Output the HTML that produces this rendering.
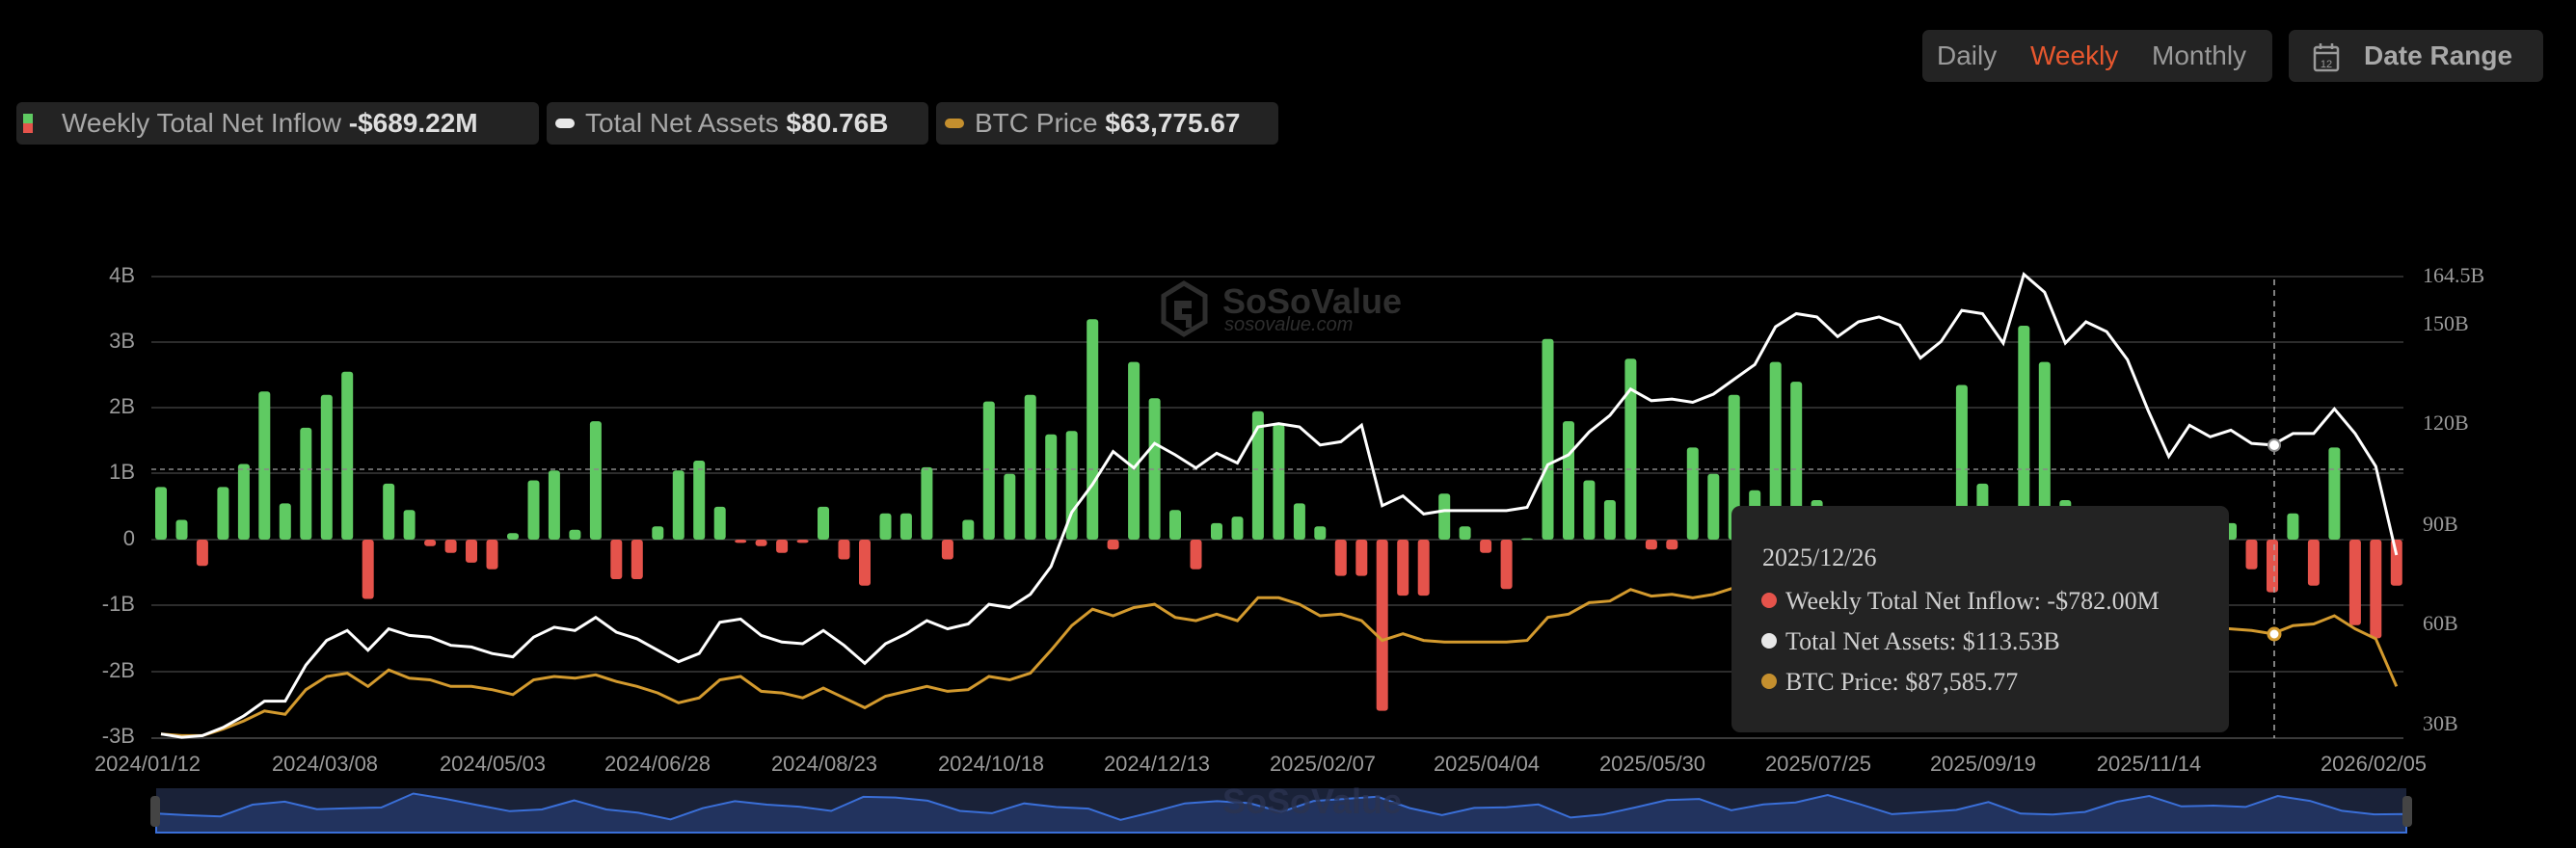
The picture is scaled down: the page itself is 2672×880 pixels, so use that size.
<!DOCTYPE html>
<html><head><meta charset="utf-8"><style>
html,body{margin:0;padding:0;background:#000;width:2672px;height:880px;overflow:hidden;font-family:"Liberation Sans",sans-serif}
.chip{position:absolute;top:106px;height:44px;background:#232323;border-radius:6px;color:#a8a8a8;font-size:28px;line-height:44px;white-space:nowrap}
.chip b{color:#dedede;font-weight:bold}
.box{position:absolute;top:31px;height:54px;background:#232323;border-radius:7px;color:#9a9a9a;font-size:28px;line-height:54px}
</style></head><body>
<div class="box" style="left:1994px;width:363px;"><span style="position:absolute;left:15px">Daily</span><span style="position:absolute;left:112px;color:#e8572e">Weekly</span><span style="position:absolute;left:238px">Monthly</span></div>
<div class="box" style="left:2374px;width:264px;">
<svg style="position:absolute;left:25px;top:14px" width="28" height="30" viewBox="0 0 28 30"><rect x="2" y="4" width="24" height="24" rx="2" fill="none" stroke="#9a9a9a" stroke-width="2.5"/><line x1="2" y1="10" x2="26" y2="10" stroke="#9a9a9a" stroke-width="2.5"/><line x1="8" y1="0" x2="8" y2="6" stroke="#9a9a9a" stroke-width="2.5"/><line x1="20" y1="0" x2="20" y2="6" stroke="#9a9a9a" stroke-width="2.5"/><text x="14" y="25" font-size="11" fill="#9a9a9a" text-anchor="middle" font-family="Liberation Sans">12</text></svg>
<span style="position:absolute;left:78px;font-weight:bold;color:#a8a8a8">Date Range</span></div>
<div class="chip" style="left:17px;width:542px"><span style="position:absolute;left:7px;top:12px;width:10px;height:10px;background:#5fca62"></span><span style="position:absolute;left:7px;top:22px;width:10px;height:10px;background:#e5534b"></span><span style="position:absolute;left:47px">Weekly Total Net Inflow <b>-$689.22M</b></span></div>
<div class="chip" style="left:567px;width:396px"><span style="position:absolute;left:9px;top:17px;width:20px;height:10px;border-radius:5px;background:#e8e8e8"></span><span style="position:absolute;left:40px">Total Net Assets <b>$80.76B</b></span></div>
<div class="chip" style="left:971px;width:355px"><span style="position:absolute;left:9px;top:17px;width:20px;height:10px;border-radius:5px;background:#c48f2e"></span><span style="position:absolute;left:40px">BTC Price <b>$63,775.67</b></span></div>

<svg id="c" style="position:absolute;left:0;top:0" width="2672" height="880" viewBox="0 0 2672 880">
<g stroke="#2c2c2c" stroke-width="2">
<line x1="157" y1="287" x2="2493" y2="287"/><line x1="157" y1="355" x2="2493" y2="355"/><line x1="157" y1="423" x2="2493" y2="423"/><line x1="157" y1="491" x2="2493" y2="491"/><line x1="157" y1="560" x2="2493" y2="560"/><line x1="157" y1="628" x2="2493" y2="628"/><line x1="157" y1="697" x2="2493" y2="697"/><line x1="157" y1="766" x2="2493" y2="766" stroke="#3a3a3a"/>
</g>
<g fill="#2e2e2e">
<path d="M1228 294 L1250 307 L1250 334 L1228 347 L1207 334 L1207 307 Z" fill="none" stroke="#2e2e2e" stroke-width="5"/>
<path d="M1218 312 h18 v8 h-10 v6 h10 v14 h-6 v-8 h-12z"/>
<text x="1268" y="325" font-size="36" font-weight="bold" font-family="Liberation Sans">SoSoValue</text>
<text x="1270" y="343" font-size="20" font-style="italic" font-family="Liberation Sans">sosovalue.com</text>
</g>
<g fill="#9a9a9a" font-size="22" font-family="Liberation Sans" text-anchor="end">
<text x="140" y="293">4B</text><text x="140" y="361">3B</text><text x="140" y="429">2B</text><text x="140" y="497">1B</text><text x="140" y="566">0</text><text x="140" y="634">-1B</text><text x="140" y="703">-2B</text><text x="140" y="771">-3B</text>
</g>
<g fill="#9a9a9a" font-size="22" font-family="Liberation Serif">
<text x="2513" y="293">164.5B</text><text x="2513" y="343">150B</text><text x="2513" y="446">120B</text><text x="2513" y="551">90B</text><text x="2513" y="654">60B</text><text x="2513" y="758">30B</text>
</g>
<g fill="#9a9a9a" font-size="22" font-family="Liberation Sans" text-anchor="middle">
<text x="153" y="800">2024/01/12</text><text x="337" y="800">2024/03/08</text><text x="511" y="800">2024/05/03</text><text x="682" y="800">2024/06/28</text><text x="855" y="800">2024/08/23</text><text x="1028" y="800">2024/10/18</text><text x="1200" y="800">2024/12/13</text><text x="1372" y="800">2025/02/07</text><text x="1542" y="800">2025/04/04</text><text x="1714" y="800">2025/05/30</text><text x="1886" y="800">2025/07/25</text><text x="2057" y="800">2025/09/19</text><text x="2229" y="800">2025/11/14</text><text x="2462" y="800">2026/02/05</text>
</g>
<g id="bars"></g>
<line x1="157" y1="487" x2="2493" y2="487" stroke="#888" stroke-width="1.5" stroke-dasharray="5,4"/>
<polyline id="btc" fill="none" stroke="#d39a2e" stroke-width="3"/>
<polyline id="tna" fill="none" stroke="#fff" stroke-width="3"/>
<line x1="2359" y1="290" x2="2359" y2="766" stroke="#aaa" stroke-width="1.5" stroke-dasharray="6,5"/>
<circle cx="2359" cy="462" r="6" fill="#fff" stroke="#888" stroke-width="2"/>
<circle cx="2359" cy="658" r="6" fill="#fff" stroke="#d39a2e" stroke-width="3"/>
<rect x="1796" y="525" width="516" height="235" rx="9" fill="#232323"/>
<g font-family="Liberation Serif" font-size="26" fill="#cfcfcf">
<text x="1828" y="587">2025/12/26</text>
<circle cx="1835" cy="623" r="8" fill="#e5534b"/><text x="1852" y="632">Weekly Total Net Inflow: -$782.00M</text>
<circle cx="1835" cy="665" r="8" fill="#e8e8e8"/><text x="1852" y="674">Total Net Assets: $113.53B</text>
<circle cx="1835" cy="707" r="8" fill="#c48f2e"/><text x="1852" y="716">BTC Price: $87,585.77</text>
</g>
<rect x="162" y="818" width="2334" height="46" fill="#1a2238"/>
<path id="sl" fill="#22335e" stroke="#3a6fd8" stroke-width="2"/>
<rect x="156" y="826" width="10" height="32" rx="4" fill="#444"/>
<rect x="2492" y="826" width="10" height="32" rx="4" fill="#444"/>
<g fill="#2b3350" opacity="0.8"><text x="1268" y="844" font-size="36" font-weight="bold" font-family="Liberation Sans">SoSoValue</text></g>
</svg>
<script>
var S=1.704;
var v=[0.8,0.3,-0.4,0.8,1.15,2.25,0.55,1.7,2.2,2.55,-0.9,0.85,0.45,-0.1,-0.2,-0.35,-0.45,0.1,0.9,1.05,0.15,1.8,-0.6,-0.6,0.2,1.05,1.2,0.5,-0.05,-0.1,-0.2,-0.05,0.5,-0.3,-0.7,0.4,0.4,1.1,-0.3,0.3,2.1,1.0,2.2,1.6,1.65,3.35,-0.15,2.7,2.15,0.45,-0.45,0.25,0.35,1.95,1.75,0.55,0.2,-0.55,-0.55,-2.6,-0.85,-0.85,0.7,0.2,-0.2,-0.75,0.02,3.05,1.8,0.9,0.6,2.75,-0.15,-0.15,1.4,1.0,2.2,0.75,2.7,2.4,0.6,0.3,-0.2,0.5,0.2,-0.3,0.5,2.35,0.85,0.4,3.25,2.7,0.6,-0.5,0.3,-0.8,-0.3,0.2,-0.6,0.1,0.25,-0.45,-0.8,0.4,-0.7,1.4,-1.3,-1.5,-0.7];
var g=document.getElementById('bars'),h='';
for(var i=0;i<v.length;i++){var x=(98+12.6*i)*S,y0=560,hh=Math.abs(v[i])*68.3,y=v[i]>0?y0-hh:y0;
h+='<rect x="'+(x-6).toFixed(1)+'" y="'+y.toFixed(1)+'" width="12" height="'+Math.max(hh,1.5).toFixed(1)+'" rx="3" fill="'+(v[i]>0?'#5fca62':'#e5534b')+'"/>';}
g.innerHTML=h;
var W=[447,449,448,443,436,427,427,405,390,384,396,383,387,388,393,394,398,400,388,382,384,376,385,389,396,403,398,379,377,387,391,392,384,393,404,392,386,378,383,380,368,370,362,345,312,295,275,285,270,277,285,276,282,260,258,260,271,269,259,308,302,313,311,311,311,311,309,283,277,263,253,237,244,243,245,240,231,222,199,191,193,205,196,193,198,218,208,189,191,209,167,178,209,196,202,219,250,278,259,266,262,270,271,264,264,249,264,284,338];
var B=[447,448,448,444,439,433,435,420,412,410,418,408,413,414,418,418,420,423,414,412,413,411,415,418,422,428,425,414,412,421,422,425,419,425,431,424,421,418,421,420,412,414,410,396,381,371,375,370,368,376,378,374,378,364,364,368,375,374,378,390,386,390,391,391,391,391,390,376,374,367,366,359,363,362,364,362,358,355,352,350,352,356,354,352,355,362,360,356,357,362,352,355,364,362,365,370,378,382,380,382];
B=B.concat([382,383,384,386,381,380,375,383,389,418]).slice(0,99).concat([382,383,384,386,381,380,375,383,389,418]);
function pts(a){var s='';for(var i=0;i<a.length;i++)s+=((98+12.6*i)*S).toFixed(1)+','+(a[i]*S).toFixed(1)+' ';return s;}
document.getElementById('tna').setAttribute('points',pts(W));
document.getElementById('btc').setAttribute('points',pts(B));
var d='M162,864 ';var n=70;
for(var i=0;i<=n;i++){var x=162+i*(2334/n);var y=837+7*Math.sin(i*1.3)+5*Math.sin(i*0.45+1)+3*Math.cos(i*2.7);d+='L'+x.toFixed(1)+','+y.toFixed(1)+' ';}
d+='L2496,864 Z';document.getElementById('sl').setAttribute('d',d);
</script>
</body></html>
